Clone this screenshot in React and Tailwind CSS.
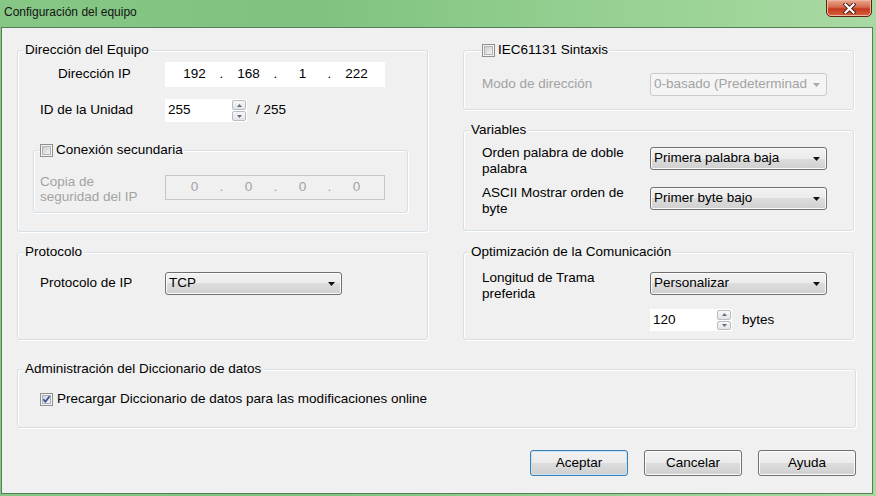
import React, { Fragment, useId } from 'react';

// Win7-style checkbox, drawn as a small svg
function CheckBox({ checked = false }) {
  const id = useId();
  return (
    <svg width="13" height="13" viewBox="0 0 13 13" className="shrink-0">
      <defs>
        <linearGradient id={id} x1="0" y1="0" x2="1" y2="1">
          <stop offset="0" stopColor={checked ? '#cbd3e0' : '#cbcbcb'} />
          <stop offset="1" stopColor={checked ? '#f3f6fb' : '#f6f6f6'} />
        </linearGradient>
      </defs>
      <rect x="0.5" y="0.5" width="12" height="12" fill="#f4f4f4" stroke="#8e8f8f" />
      <rect x="2.5" y="2.5" width="8" height="8" fill={`url(#${id})`} stroke={checked ? '#a7b1c3' : '#b4b4b4'} />
      {checked && (
        <path d="M3.4 6.2 L5.4 8.8 L9.6 3.2" fill="none" stroke="#3b4f86" strokeWidth="1.7" strokeLinejoin="round" />
      )}
    </svg>
  );
}

function GroupBox({ title, titleClass = 'ml-[5px] px-[2px]', className = '', children }) {
  return (
    <div className={`rounded-[3px] border border-[#d5dfe5] shadow-[inset_1px_1px_0_#fff,1px_1px_0_#fff] ${className}`}>
      <div className={`-mt-[9px] flex h-[16px] w-fit items-center gap-[3px] bg-[#f0f0f0] leading-[16px] ${titleClass}`}>
        {title}
      </div>
      {children}
    </div>
  );
}

function Combo({ value, disabled = false, className = '' }) {
  return (
    <div
      className={`flex h-[23px] items-center rounded-[3px] border ${
        disabled
          ? 'border-[#cacaca] bg-[#f4f4f4] text-[#a3a3a3]'
          : 'border-[#707070] bg-[linear-gradient(#f2f2f2,#ebebeb_50%,#dddddd_50%,#cfcfcf)] shadow-[inset_0_0_0_1px_#fbfbfb]'
      } ${className}`}
    >
      <span className="flex-1 whitespace-nowrap pl-[3px]">{value}</span>
      <span className="flex w-[17px] shrink-0 justify-center pr-[2px]">
        <svg width="7" height="4" viewBox="0 0 7 4">
          <path d="M0 0h7L3.5 4z" fill={disabled ? '#a9a9a9' : '#111'} />
        </svg>
      </span>
    </div>
  );
}

function SpinButton({ up }) {
  return (
    <div className="flex flex-1 items-center justify-center rounded-[2px] border border-[#b9bdc2] bg-[linear-gradient(#f7f7f7,#e4e4e4)]">
      <svg width="5" height="3" viewBox="0 0 5 3">
        <path d={up ? 'M0 3h5L2.5 0z' : 'M0 0h5L2.5 3z'} fill="#5c6f89" />
      </svg>
    </div>
  );
}

function SpinBox({ value, className = '' }) {
  return (
    <div className={`flex items-stretch bg-white ${className}`}>
      <span className="flex flex-1 items-center pl-[3px]">{value}</span>
      <div className="flex w-[16px] flex-col gap-px p-px">
        <SpinButton up />
        <SpinButton />
      </div>
    </div>
  );
}

function IpField({ parts, disabled = false }) {
  return (
    <div
      className={`flex h-[25px] w-[220px] items-center ${
        disabled ? 'border border-[#c6c6c6] bg-[#f0f0f0] pl-[6px] text-[#a3a3a3]' : 'bg-white pl-[7px]'
      }`}
    >
      {parts.map((p, i) => (
        <Fragment key={i}>
          {i > 0 && <span className="w-[9px] text-center">.</span>}
          <span className="w-[45px] text-center">{p}</span>
        </Fragment>
      ))}
    </div>
  );
}

function DialogButton({ label, primary = false }) {
  return (
    <button
      className={`h-[26px] w-[98px] rounded-[3px] border bg-[linear-gradient(#f2f2f2,#ebebeb_50%,#dddddd_50%,#cfcfcf)] ${
        primary ? 'border-[#3c7fb1] shadow-[inset_0_0_0_1px_#c5e4f6]' : 'border-[#707070] shadow-[inset_0_0_0_1px_#fbfbfb]'
      }`}
    >
      {label}
    </button>
  );
}

function CloseButton() {
  return (
    <div className="mr-[4px] -mt-px flex h-[18px] w-[46px] items-center justify-center rounded-b-[5px] border border-[#5d2418] bg-[linear-gradient(#eaa890,#d46a4d_45%,#c23b1e_55%,#d8603c)] shadow-[inset_0_0_0_1px_#f0b5a0]">
      <svg width="13" height="11" viewBox="0 0 13 11">
        <path d="M2.5 1.5 L10.5 9.5 M10.5 1.5 L2.5 9.5" stroke="#4a1a12" strokeWidth="4" strokeLinecap="square" />
        <path d="M2.5 1.5 L10.5 9.5 M10.5 1.5 L2.5 9.5" stroke="#fff" strokeWidth="2.2" strokeLinecap="square" />
      </svg>
    </div>
  );
}

export default function App() {
  return (
    <div className="flex h-[496px] w-[876px] flex-col overflow-hidden bg-[linear-gradient(90deg,#86c786,#7fc27f_35%,#93cf90_65%,#a9d9a3)] font-['Liberation_Sans',Arial,sans-serif] text-[13.5px] text-black">
      {/* title bar */}
      <div className="flex h-[27px] shrink-0 items-start justify-between">
        <span className="pl-[4px] pt-[5px] text-[12px] leading-[14px] text-[#141414]">Configuración del equipo</span>
        <CloseButton />
      </div>

      {/* client area */}
      <div className="ml-[1px] h-[467px] w-[872px] border border-[#557f55] bg-[#f0f0f0] pl-[15px] pt-[22px]">
        <div className="flex gap-[35px]">
          <div className="flex w-[411px] flex-col">
            <GroupBox title="Dirección del Equipo" className="h-[182px]">
              <div className="mt-[4px] flex h-[25px] items-center">
                <span className="w-[147px] pl-[40px]">Dirección IP</span>
                <IpField parts={['192', '168', '1', '222']} />
              </div>
              <div className="mt-[12px] flex h-[23px] items-center">
                <span className="w-[147px] pl-[22px]">ID de la Unidad</span>
                <SpinBox value="255" className="h-[23px] w-[82px]" />
                <span className="ml-[9px]">/ 255</span>
              </div>
              <GroupBox
                title={<><CheckBox /><span>Conexión secundaria</span></>}
                titleClass="ml-[5px] px-[1px]"
                className="ml-[15px] mt-[28px] h-[63px] w-[375px]"
              >
                <div className="mt-[17px] flex h-[25px] items-center">
                  <span className="w-[131px] pl-[6px] pt-[3px] leading-[15px] text-[#a3a3a3]">
                    Copia de<br />seguridad del IP
                  </span>
                  <IpField parts={['0', '0', '0', '0']} disabled />
                </div>
              </GroupBox>
            </GroupBox>

            <GroupBox title="Protocolo" className="mt-[20px] h-[88px]">
              <div className="mt-[12px] flex h-[23px] items-center">
                <span className="w-[147px] pl-[22px]">Protocolo de IP</span>
                <Combo value="TCP" className="w-[177px]" />
              </div>
            </GroupBox>
          </div>

          <div className="flex w-[391px] flex-col">
            <GroupBox
              title={<><CheckBox /><span>IEC61131 Sintaxis</span></>}
              titleClass="ml-[17px] px-[1px]"
              className="h-[60px]"
            >
              <div className="mt-[15px] flex h-[23px] items-center">
                <span className="w-[186px] pl-[18px] text-[#a3a3a3]">Modo de dirección</span>
                <Combo value="0-basado (Predeterminad" disabled className="w-[177px]" />
              </div>
            </GroupBox>

            <GroupBox title="Variables" className="mt-[20px] h-[101px]">
              <div className="mt-[7px] flex items-start">
                <span className="w-[186px] pl-[18px] leading-[16px]">
                  Orden palabra de doble<br />palabra
                </span>
                <Combo value="Primera palabra baja" className="mt-[2px] w-[177px]" />
              </div>
              <div className="mt-[8px] flex items-start">
                <span className="w-[186px] pl-[18px] leading-[16px]">
                  ASCII Mostrar orden de<br />byte
                </span>
                <Combo value="Primer byte bajo" className="mt-[2px] w-[177px]" />
              </div>
            </GroupBox>

            <GroupBox title="Optimización de la Comunicación" className="mt-[21px] h-[88px]">
              <div className="mt-[10px] flex items-start">
                <span className="w-[186px] pl-[18px] leading-[16px]">
                  Longitud de Trama<br />preferida
                </span>
                <Combo value="Personalizar" className="mt-[2px] w-[177px]" />
              </div>
              <div className="ml-[186px] mt-[7px] flex h-[22px] items-center">
                <SpinBox value="120" className="h-[22px] w-[82px]" />
                <span className="ml-[10px]">bytes</span>
              </div>
            </GroupBox>
          </div>
        </div>

        <GroupBox title="Administración del Diccionario de datos" className="mt-[29px] h-[59px] w-[839px]">
          <div className="mt-[14px] flex h-[16px] items-center gap-[4px] pl-[22px]">
            <CheckBox checked />
            <span>Precargar Diccionario de datos para las modificaciones online</span>
          </div>
        </GroupBox>

        <div className="mt-[22px] flex w-[839px] justify-end gap-[16px]">
          <DialogButton label="Aceptar" primary />
          <DialogButton label="Cancelar" />
          <DialogButton label="Ayuda" />
        </div>
      </div>
    </div>
  );
}
